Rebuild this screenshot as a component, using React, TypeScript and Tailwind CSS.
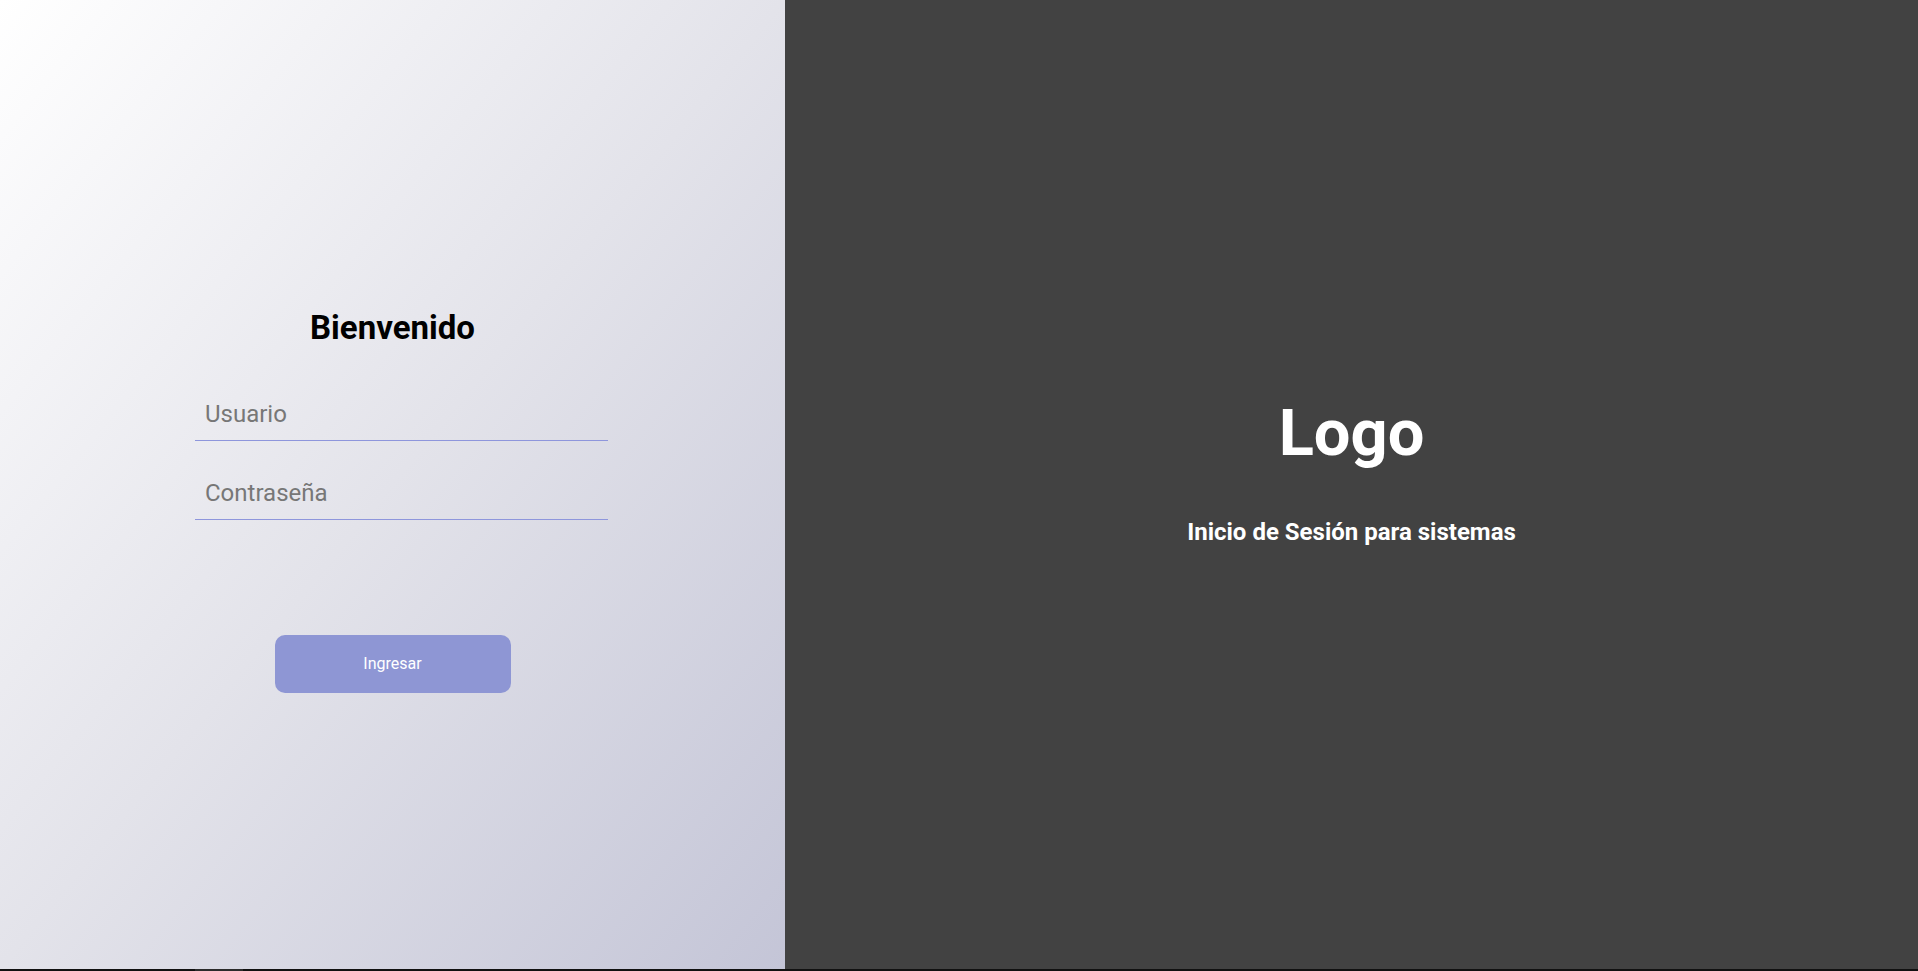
import { useState } from "react";

const App = () => {
  const [user, setUser] = useState("");
  const [pass, setPass] = useState("");

  return (
    <div className="w-full h-[971px] bg-[#111111] font-['Roboto',sans-serif] overflow-hidden">
      <div className="flex w-full h-[969px]">
        <div className="w-[785px] h-full bg-linear-to-br from-white via-[#e3e3ea] to-[#c4c5d7] flex flex-col items-center justify-center pt-[34px]">
          <h1 className="text-[33px] leading-none font-bold text-black">
            Bienvenido
          </h1>
          <form
            className="w-[413px] ml-[18px] mt-[48px] flex flex-col"
            onSubmit={(e) => e.preventDefault()}
          >
            <input
              type="text"
              value={user}
              onChange={(e) => setUser(e.target.value)}
              placeholder="Usuario"
              className="w-full bg-transparent border-b border-[#8e96dc] pt-2 pb-3 px-[10px] text-[24px] leading-[24px] text-[#333] placeholder:text-[#777] outline-none"
            />
            <input
              type="password"
              value={pass}
              onChange={(e) => setPass(e.target.value)}
              placeholder="Contraseña"
              className="w-full mt-[30px] bg-transparent border-b border-[#8e96dc] pt-2 pb-3 px-[10px] text-[24px] leading-[24px] text-[#333] placeholder:text-[#777] outline-none"
            />
          </form>
          <button
            type="button"
            className="mt-[115px] w-[236px] h-[58px] rounded-[10px] bg-[#8e96d4] text-white text-[16px]"
          >
            Ingresar
          </button>
        </div>

        <div className="flex-1 h-full bg-[#424242] flex flex-col items-center justify-center pb-[25px]">
          <h2 className="text-[65px] leading-none font-bold text-white">Logo</h2>
          <p className="mt-[54px] text-[24px] leading-none font-bold text-white">
            Inicio de Sesión para sistemas
          </p>
        </div>
      </div>
      <div className="h-[2px] w-full flex">
        <div className="ml-[195px] w-[48px] h-full bg-[#2b2b2b]" />
      </div>
    </div>
  );
};

export default App;
